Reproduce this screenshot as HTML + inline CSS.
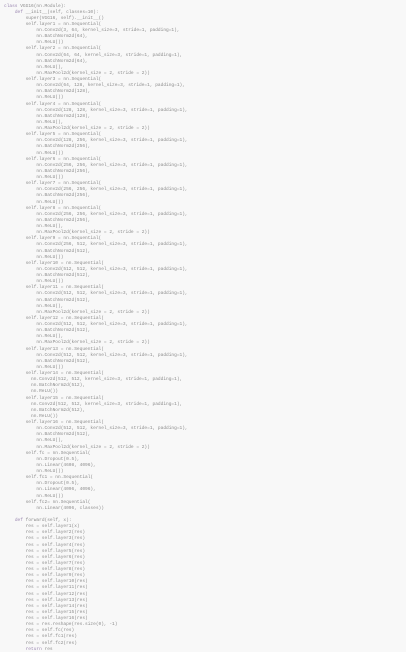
<!DOCTYPE html>
<html><head><meta charset="utf-8"><style>
html,body{margin:0;padding:0;background:#f8f8f8;width:406px;height:652px;overflow:hidden}
pre{margin:0;padding:3.5px 0 0 4px;font-family:"Liberation Mono",monospace;font-size:4.5px;line-height:6.13px;color:#8c8c8c;white-space:pre}
.k{color:#9a86b0}
</style></head><body><pre><span class="k">class</span> VGG16(nn.Module):
    <span class="k">def</span> __init__(self, classes=10):
        super(VGG16, self).__init__()
        self.layer1 = nn.Sequential(
            nn.Conv2d(3, 64, kernel_size=3, stride=1, padding=1),
            nn.BatchNorm2d(64),
            nn.ReLU())
        self.layer2 = nn.Sequential(
            nn.Conv2d(64, 64, kernel_size=3, stride=1, padding=1),
            nn.BatchNorm2d(64),
            nn.ReLU(),
            nn.MaxPool2d(kernel_size = 2, stride = 2))
        self.layer3 = nn.Sequential(
            nn.Conv2d(64, 128, kernel_size=3, stride=1, padding=1),
            nn.BatchNorm2d(128),
            nn.ReLU())
        self.layer4 = nn.Sequential(
            nn.Conv2d(128, 128, kernel_size=3, stride=1, padding=1),
            nn.BatchNorm2d(128),
            nn.ReLU(),
            nn.MaxPool2d(kernel_size = 2, stride = 2))
        self.layer5 = nn.Sequential(
            nn.Conv2d(128, 256, kernel_size=3, stride=1, padding=1),
            nn.BatchNorm2d(256),
            nn.ReLU())
        self.layer6 = nn.Sequential(
            nn.Conv2d(256, 256, kernel_size=3, stride=1, padding=1),
            nn.BatchNorm2d(256),
            nn.ReLU())
        self.layer7 = nn.Sequential(
            nn.Conv2d(256, 256, kernel_size=3, stride=1, padding=1),
            nn.BatchNorm2d(256),
            nn.ReLU())
        self.layer8 = nn.Sequential(
            nn.Conv2d(256, 256, kernel_size=3, stride=1, padding=1),
            nn.BatchNorm2d(256),
            nn.ReLU(),
            nn.MaxPool2d(kernel_size = 2, stride = 2))
        self.layer9 = nn.Sequential(
            nn.Conv2d(256, 512, kernel_size=3, stride=1, padding=1),
            nn.BatchNorm2d(512),
            nn.ReLU())
        self.layer10 = nn.Sequential(
            nn.Conv2d(512, 512, kernel_size=3, stride=1, padding=1),
            nn.BatchNorm2d(512),
            nn.ReLU())
        self.layer11 = nn.Sequential(
            nn.Conv2d(512, 512, kernel_size=3, stride=1, padding=1),
            nn.BatchNorm2d(512),
            nn.ReLU(),
            nn.MaxPool2d(kernel_size = 2, stride = 2))
        self.layer12 = nn.Sequential(
            nn.Conv2d(512, 512, kernel_size=3, stride=1, padding=1),
            nn.BatchNorm2d(512),
            nn.ReLU(),
            nn.MaxPool2d(kernel_size = 2, stride = 2))
        self.layer13 = nn.Sequential(
            nn.Conv2d(512, 512, kernel_size=3, stride=1, padding=1),
            nn.BatchNorm2d(512),
            nn.ReLU())
        self.layer14 = nn.Sequential(
          nn.Conv2d(512, 512, kernel_size=3, stride=1, padding=1),
          nn.BatchNorm2d(512),
          nn.ReLU())
        self.layer15 = nn.Sequential(
          nn.Conv2d(512, 512, kernel_size=3, stride=1, padding=1),
          nn.BatchNorm2d(512),
          nn.ReLU())
        self.layer16 = nn.Sequential(
            nn.Conv2d(512, 512, kernel_size=3, stride=1, padding=1),
            nn.BatchNorm2d(512),
            nn.ReLU(),
            nn.MaxPool2d(kernel_size = 2, stride = 2))
        self.fc = nn.Sequential(
            nn.Dropout(0.5),
            nn.Linear(4608, 4096),
            nn.ReLU())
        self.fc1 = nn.Sequential(
            nn.Dropout(0.5),
            nn.Linear(4096, 4096),
            nn.ReLU())
        self.fc2= nn.Sequential(
            nn.Linear(4096, classes))

    <span class="k">def</span> forward(self, x):
        res = self.layer1(x)
        res = self.layer2(res)
        res = self.layer3(res)
        res = self.layer4(res)
        res = self.layer5(res)
        res = self.layer6(res)
        res = self.layer7(res)
        res = self.layer8(res)
        res = self.layer9(res)
        res = self.layer10(res)
        res = self.layer11(res)
        res = self.layer12(res)
        res = self.layer13(res)
        res = self.layer14(res)
        res = self.layer15(res)
        res = self.layer16(res)
        res = res.reshape(res.size(0), -1)
        res = self.fc(res)
        res = self.fc1(res)
        res = self.fc2(res)
        <span class="k">return</span> res</pre></body></html>
